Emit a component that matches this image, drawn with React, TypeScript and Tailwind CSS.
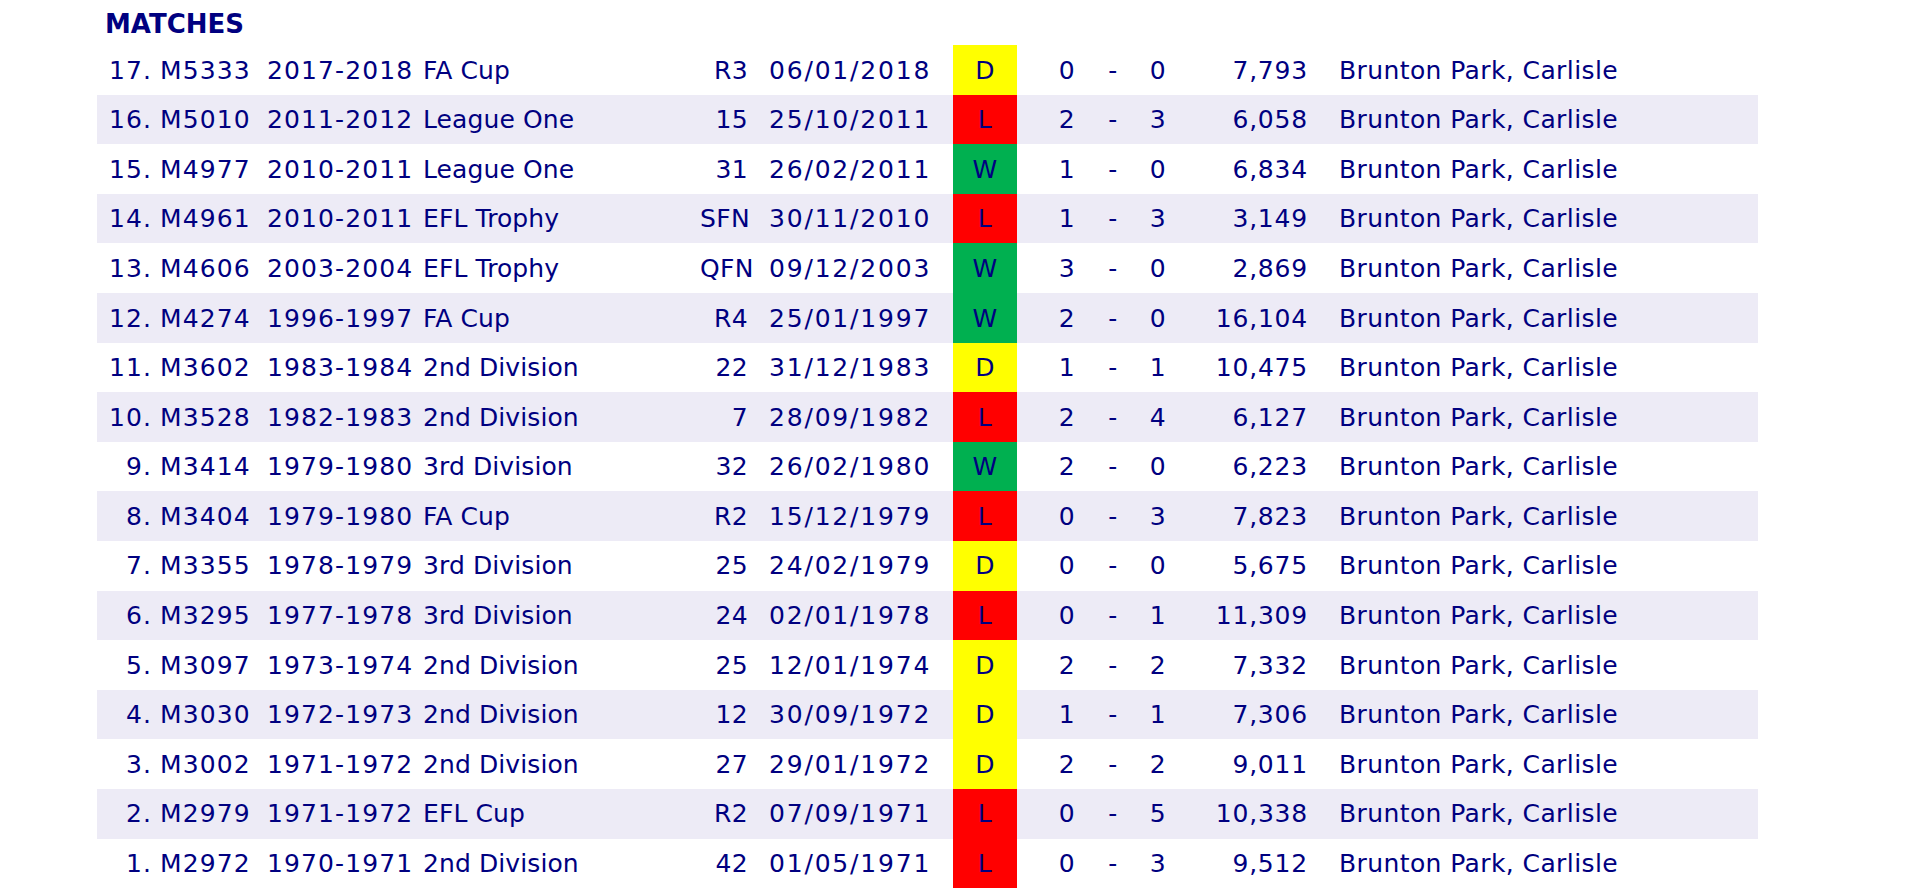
const matches = [
  { n: 17, code: 'M5333', season: '2017-2018', comp: 'FA Cup', round: 'R3', date: '06/01/2018', res: 'D', f: 0, a: 0, att: '7,793' },
  { n: 16, code: 'M5010', season: '2011-2012', comp: 'League One', round: '15', date: '25/10/2011', res: 'L', f: 2, a: 3, att: '6,058' },
  { n: 15, code: 'M4977', season: '2010-2011', comp: 'League One', round: '31', date: '26/02/2011', res: 'W', f: 1, a: 0, att: '6,834' },
  { n: 14, code: 'M4961', season: '2010-2011', comp: 'EFL Trophy', round: 'SFN', date: '30/11/2010', res: 'L', f: 1, a: 3, att: '3,149' },
  { n: 13, code: 'M4606', season: '2003-2004', comp: 'EFL Trophy', round: 'QFN', date: '09/12/2003', res: 'W', f: 3, a: 0, att: '2,869' },
  { n: 12, code: 'M4274', season: '1996-1997', comp: 'FA Cup', round: 'R4', date: '25/01/1997', res: 'W', f: 2, a: 0, att: '16,104' },
  { n: 11, code: 'M3602', season: '1983-1984', comp: '2nd Division', round: '22', date: '31/12/1983', res: 'D', f: 1, a: 1, att: '10,475' },
  { n: 10, code: 'M3528', season: '1982-1983', comp: '2nd Division', round: '7', date: '28/09/1982', res: 'L', f: 2, a: 4, att: '6,127' },
  { n: 9, code: 'M3414', season: '1979-1980', comp: '3rd Division', round: '32', date: '26/02/1980', res: 'W', f: 2, a: 0, att: '6,223' },
  { n: 8, code: 'M3404', season: '1979-1980', comp: 'FA Cup', round: 'R2', date: '15/12/1979', res: 'L', f: 0, a: 3, att: '7,823' },
  { n: 7, code: 'M3355', season: '1978-1979', comp: '3rd Division', round: '25', date: '24/02/1979', res: 'D', f: 0, a: 0, att: '5,675' },
  { n: 6, code: 'M3295', season: '1977-1978', comp: '3rd Division', round: '24', date: '02/01/1978', res: 'L', f: 0, a: 1, att: '11,309' },
  { n: 5, code: 'M3097', season: '1973-1974', comp: '2nd Division', round: '25', date: '12/01/1974', res: 'D', f: 2, a: 2, att: '7,332' },
  { n: 4, code: 'M3030', season: '1972-1973', comp: '2nd Division', round: '12', date: '30/09/1972', res: 'D', f: 1, a: 1, att: '7,306' },
  { n: 3, code: 'M3002', season: '1971-1972', comp: '2nd Division', round: '27', date: '29/01/1972', res: 'D', f: 2, a: 2, att: '9,011' },
  { n: 2, code: 'M2979', season: '1971-1972', comp: 'EFL Cup', round: 'R2', date: '07/09/1971', res: 'L', f: 0, a: 5, att: '10,338' },
  { n: 1, code: 'M2972', season: '1970-1971', comp: '2nd Division', round: '42', date: '01/05/1971', res: 'L', f: 0, a: 3, att: '9,512' },
]

const resultBg: Record<string, string> = {
  W: 'bg-[#00b050]',
  D: 'bg-[#ffff00]',
  L: 'bg-[#ff0000]',
}

export default function App() {
  return (
    <div className="min-h-[890px] bg-white text-[#000080] font-['DejaVu_Sans',sans-serif]">
      <div className="pl-[105px] pt-[9px] pb-[6px] h-[45px] text-[26px] leading-[30px] font-bold">MATCHES</div>
      <div className="ml-[97px] w-[1661px]">
        {matches.map((m, i) => (
          <div
            key={m.code}
            className={`flex h-[49.6px] items-center text-[25px] tracking-[0.4px] whitespace-nowrap ${i % 2 === 1 ? 'bg-[#edebf6]' : ''}`}
          >
            <span className="w-[55px] text-right pt-[1px] tracking-[1.1px]">{m.n}.</span>
            <span className="w-[115px] pl-[8px] pt-[1px] tracking-[1.1px]">{m.code}</span>
            <span className="w-[155px] pt-[1px] tracking-[1.1px]">{m.season}</span>
            <span className="w-[278px] pl-[1px] pt-[1px] tracking-[0.1px]">{m.comp}</span>
            <span className="w-[48px] text-right pt-[1px]">{m.round}</span>
            <span className="w-[205px] pl-[21px] pt-[1px] tracking-[1.8px]">{m.date}</span>
            <span className={`w-[64px] h-full flex items-center justify-center pt-[1px] ${resultBg[m.res]}`}>{m.res}</span>
            <span className="w-[40px] ml-[30px] text-center pt-[1px]">{m.f}</span>
            <span className="w-[52px] text-center pt-[1px]">-</span>
            <span className="w-[38px] text-center pt-[1px]">{m.a}</span>
            <span className="w-[131px] text-right pt-[1px] tracking-[0.8px]">{m.att}</span>
            <span className="pl-[31px] pt-[1px]">Brunton Park, Carlisle</span>
          </div>
        ))}
      </div>
    </div>
  )
}
